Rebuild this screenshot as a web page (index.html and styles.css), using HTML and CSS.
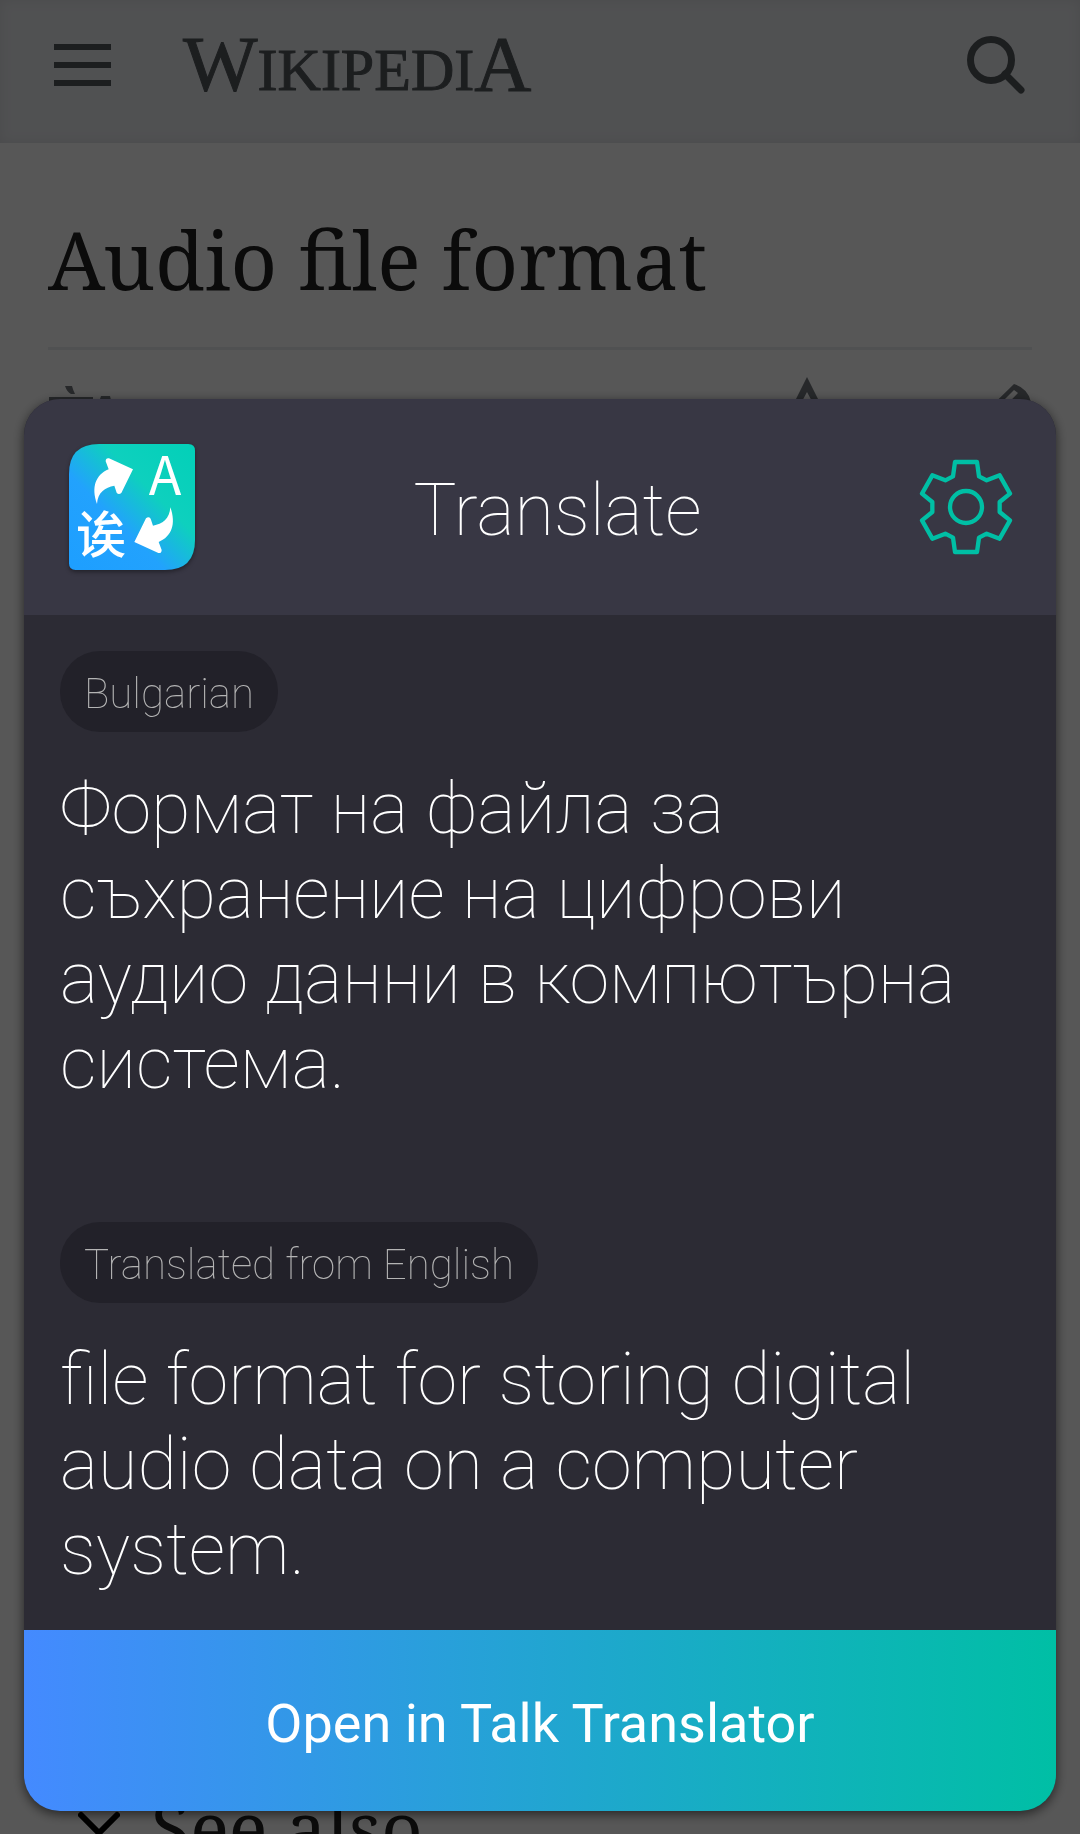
FILE: index.html
```html
<!DOCTYPE html>
<html lang="en">
<head>
<meta charset="utf-8">
<meta name="viewport" content="width=device-width, initial-scale=1">
<title>Audio file format</title>
<link rel="stylesheet" href="styles.css">
</head>
<body>
<div class="page">
  <header class="site-header">
    <button class="icon-button" aria-label="Menu">
      <svg class="menu-icon" viewBox="0 0 57 42"><path d="M0 0h57v6H0zM0 18h57v6H0zM0 36h57v6H0z"/></svg>
    </button>
    <a class="wordmark" href="#">W<span class="wordmark-small">IKIPEDI</span>A</a>
    <button class="icon-button search-button" aria-label="Search">
      <svg class="search-icon" viewBox="0 0 60 60"><circle cx="25" cy="25" r="20.5"/><path d="M39 39l16 16"/></svg>
    </button>
  </header>
  <main class="article">
    <h1 class="article-title">Audio file format</h1>
    <div class="article-tools">
      <button class="icon-button" aria-label="Language">
        <svg class="tool-icon" viewBox="0 0 66 66"><path d="M17 2h7q1 4 3 8h-4q-4-2-6-8zM1 13h44v6H1zM53 12h9l3 12H49z"/></svg>
      </button>
      <button class="icon-button watch-button" aria-label="Watch">
        <svg class="tool-icon tool-star" viewBox="0 0 66 66"><path fill-rule="evenodd" d="M33 1l12 24 20 2-16 14 5 23-21-12-21 12 5-23L1 27l20-2zM33 16l-8 15-11 1 9 8-3 13 13-7 13 7-3-13 9-8-11-1z"/></svg>
      </button>
      <button class="icon-button" aria-label="Edit">
        <svg class="tool-icon" viewBox="0 0 66 66"><path fill-rule="evenodd" d="M48 0q14 4 17 18L20 62H4V43zM48 6L11 43l4 4 37-38z"/></svg>
      </button>
    </div>
    <h2 class="section-title">
      <svg class="chevron" viewBox="0 0 42 30"><path d="M3 4l18 18L39 4"/></svg>
      See also
    </h2>
  </main>
</div>

<div class="scrim">
  <section class="dialog" role="dialog" aria-labelledby="dialog-title">
    <header class="dialog-header">
      <svg class="app-icon" viewBox="0 0 378 378" aria-hidden="true">
        <defs>
          <linearGradient id="app-fill" x1="0" y1="1" x2="1" y2="0">
            <stop offset="0.05" stop-color="#1e9fff"/>
            <stop offset="0.38" stop-color="#22a2fd"/>
            <stop offset="0.64" stop-color="#0ed0be"/>
            <stop offset="1" stop-color="#02d0b8"/>
          </linearGradient>
        </defs>
        <path fill="url(#app-fill)" d="M90 0H358Q378 0 378 20V288Q378 378 288 378H20Q0 378 0 358V90Q0 0 90 0Z"/>
        <g class="app-glyphs">
          <path id="arrow" d="M84 180C66 130 80 92 119 76L110 52Q110 41 120 43L192 76L157 147Q149 154 143 146L136 125C108 130 86 145 84 180Z"/>
          <use href="#arrow" transform="rotate(180 194 185)"/>
          <text class="glyph-latin" x="239" y="154">A</text>
          <text class="glyph-han" x="21" y="326">诶</text>
        </g>
      </svg>
      <h2 class="dialog-title" id="dialog-title">Translate</h2>
      <button class="icon-button" aria-label="Settings">
        <svg class="gear-icon" viewBox="-144 -144 288 288"><path d="M-33-135H33L39-92L62-80L101-95L132-40L101-15V15L132 40L101 95L62 80L39 92L33 135H-33L-39 92L-62 80L-101 95L-132 40L-101 15V-15L-132-40L-101-95L-62-80L-39-92Z"/><circle r="48"/></svg>
      </button>
    </header>
    <div class="dialog-body">
      <span class="language">Bulgarian</span>
      <p class="phrase" lang="bg">Формат на файла за съхранение на цифрови аудио данни в компютърна система.</p>
      <span class="language language-source">Translated from English</span>
      <p class="phrase">file format for storing digital audio data on a computer system.</p>
    </div>
    <button class="open-button">Open in Talk Translator</button>
  </section>
</div>
</body>
</html>
```
FILE: styles.css
```css
* {
  box-sizing: border-box;
}

body {
  margin: 0;
  background: #fff;
  font-family: Roboto, sans-serif;
}

h1, h2, p {
  margin: 0;
}

.page {
  height: 100vh;
  overflow: hidden;
  display: flex;
  flex-direction: column;
}

.icon-button {
  display: flex;
  padding: 0;
  border: 0;
  background: none;
}

.site-header {
  flex: none;
  display: flex;
  align-items: center;
  height: 143px;
  padding: 0 54px 14px;
  background: #eaecf0;
  box-shadow: inset 0 0 12px #d8dade;
}

.menu-icon {
  width: 57px;
  height: 42px;
  fill: #54595d;
}

.wordmark {
  margin-left: 72px;
  padding-top: 4px;
  color: #54595d;
  font: 79px/90px "Liberation Serif", serif;
  text-decoration: none;
  -webkit-text-stroke: 1px #54595d;
}

.wordmark-small {
  font-size: 60px;
}

.search-button {
  margin-left: auto;
}

.search-icon {
  width: 60px;
  height: 60px;
  fill: none;
  stroke: #54595d;
  stroke-width: 7;
  stroke-linecap: round;
}

.article {
  flex: 1;
  display: flex;
  flex-direction: column;
  padding: 0 48px;
}

.article-title {
  padding: 68px 0 40px;
  border-bottom: 3px solid #eaecf0;
  color: #222;
  font: 81px/96px "Noto Serif", "DejaVu Serif Condensed", serif;
}

.article-tools {
  display: flex;
  padding-top: 34px;
  gap: 126px;
}

.tool-icon {
  width: 66px;
  height: 66px;
  fill: #72777d;
}

.tool-star {
  margin-top: -8px;
}

.watch-button {
  margin-left: auto;
}

.section-title {
  display: flex;
  align-items: center;
  gap: 31px;
  margin: auto 0 -40px;
  padding-left: 30px;
  color: #222;
  font: 72px/96px "Noto Serif", "DejaVu Serif Condensed", serif;
}

.chevron {
  width: 42px;
  height: 30px;
  fill: none;
  stroke: #000;
  stroke-width: 6;
  stroke-linecap: round;
}

.scrim {
  position: fixed;
  inset: 0;
  display: flex;
  flex-direction: column;
  justify-content: flex-end;
  padding: 0 24px 23px;
  background: rgba(0, 0, 0, 0.66);
}

.dialog {
  overflow: hidden;
  border-radius: 36px;
  background: #2c2b34;
  box-shadow: 0 3px 12px rgba(0, 0, 0, 0.6);
  color: #fff;
}

.dialog-header {
  display: flex;
  align-items: center;
  justify-content: space-between;
  height: 216px;
  padding: 0 42px 0 45px;
  background: #383744;
}

.app-icon {
  width: 126px;
  height: 126px;
  filter: drop-shadow(0 2px 2px rgba(0, 0, 0, 0.4));
}

.app-glyphs {
  fill: #fff;
  font-family: "Noto Sans CJK SC", sans-serif;
}

.glyph-latin {
  font-size: 161px;
}

.glyph-han {
  font-size: 150px;
  font-weight: 500;
}

.dialog-title {
  padding: 8px 0 0 2px;
  font-size: 72px;
  font-weight: 100;
  line-height: 84px;
}

.gear-icon {
  width: 96px;
  height: 96px;
  fill: none;
  stroke: #00bfa5;
  stroke-width: 13;
  stroke-linejoin: round;
}

.dialog-body {
  padding: 36px 36px 38px;
}

.language {
  display: block;
  width: fit-content;
  padding: 18px 24px 14px;
  border-radius: 40px;
  background: #222129;
  color: #b4b4b4;
  font-size: 42px;
  font-weight: 100;
  line-height: 49px;
}

.language-source {
  margin-top: 116px;
}

.phrase {
  margin-top: 34px;
  font-size: 72px;
  font-weight: 100;
  line-height: 85px;
}

.open-button {
  display: block;
  width: 100%;
  height: 181px;
  padding: 6px 0 0;
  border: 0;
  background: linear-gradient(90deg, #448aff, #00bfa5);
  color: #fff;
  font: 54px/64px Roboto, sans-serif;
}
```
